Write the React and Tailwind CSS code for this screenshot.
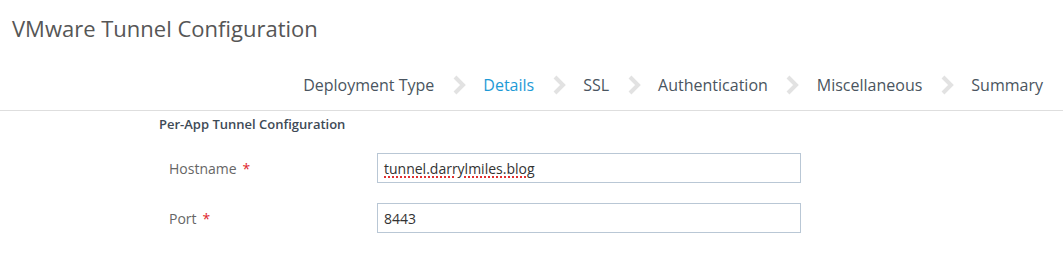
import React from 'react';

const steps = ['Deployment Type', 'Details', 'SSL', 'Authentication', 'Miscellaneous', 'Summary'];

function Chevron() {
  return (
    <div className="w-[49px] flex justify-center items-center">
      <svg width="14" height="20" viewBox="0 0 14 20" fill="none">
        <polyline points="3,2 11,10 3,18" stroke="#e2e2e2" strokeWidth="4" strokeLinejoin="miter" />
      </svg>
    </div>
  );
}

function Field({ label, value, spell }) {
  return (
    <div className="flex items-center h-[30px]">
      <div className="w-[218px] pl-[10px] text-[14px] text-[#666]">
        {label}<span className="ml-[6px] text-[#e0262b]">*</span>
      </div>
      <div className="w-[424px] h-[30px] border border-[#b9c7d5] bg-white flex items-center px-[6px] text-[14px] text-[#333]">
        <span className={spell ? 'underline decoration-dotted decoration-[#e03030] decoration-2 underline-offset-[3px]' : ''}>
          {value}
        </span>
      </div>
    </div>
  );
}

export default function App() {
  return (
    <div className="w-[1063px] h-[264px] bg-white overflow-hidden" style={{ fontFamily: '"Open Sans", "Noto Sans", sans-serif' }}>
      <div className="h-[60px] pl-[12px] pt-[13px]">
        <h1 className="text-[22px] leading-[30px] text-[#565656]">VMware Tunnel Configuration</h1>
      </div>
      <div className="h-[51px] border-b border-[#dedede] flex justify-end items-center pr-[20px]">
        {steps.map((s, i) => (
          <React.Fragment key={s}>
            {i > 0 && <Chevron />}
            <span className={`text-[16px] leading-[22px] ${s === 'Details' ? 'text-[#1e9ad6]' : 'text-[#4a5560]'}`}>{s}</span>
          </React.Fragment>
        ))}
      </div>
      <div className="pl-[159px]">
        <div className="mt-[4px] text-[13px] leading-[18px] font-semibold text-[#3e4a56]">Per-App Tunnel Configuration</div>
        <div className="mt-[20px] flex flex-col gap-[20px]">
          <Field label="Hostname" value="tunnel.darrylmiles.blog" spell />
          <Field label="Port" value="8443" />
        </div>
      </div>
    </div>
  );
}
